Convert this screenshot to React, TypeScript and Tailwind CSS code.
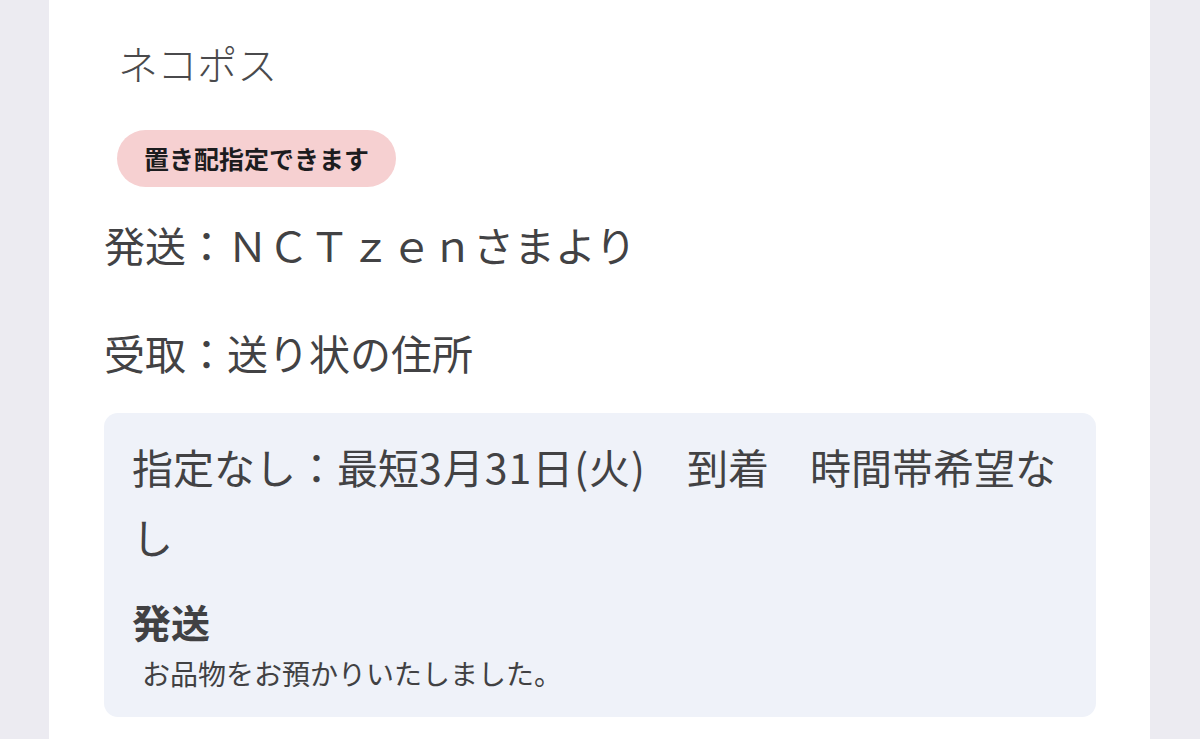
const jp = "font-['Noto_Sans_CJK_JP','Noto_Sans',sans-serif]";

const DeliveryStatus = ({ title, note }: { title: string; note: string }) => (
  <div className="mt-[25px]">
    <div className="text-[39px] leading-[50px] font-bold text-[#414143]">{title}</div>
    <div className="mt-[7px] ml-[10px] text-[28px] leading-[40px] text-[#414143]">{note}</div>
  </div>
);

export default function App() {
  return (
    <div className={`w-full h-[739px] overflow-hidden bg-[#ecebf1] pl-[49px] pr-[50px] ${jp}`}>
      <div className="h-full bg-white pl-[55px] pr-[54px] pt-[35px] flex flex-col items-start">
        <div className="ml-[14px] text-[40px] leading-[56px] font-light text-[#4a4a4c]">ネコポス</div>

        <span className="mt-[39px] ml-[13px] inline-flex items-center h-[57px] px-[27px] rounded-full bg-[#f6d0d1] text-[25px] font-bold text-[#1c1c1e]">
          置き配指定できます
        </span>

        <div className="mt-[27px] text-[41px] leading-[60px] text-[#424244]">発送：ＮＣＴｚｅｎさまより</div>
        <div className="mt-[48px] text-[41px] leading-[60px] text-[#424244]">受取：送り状の住所</div>

        <div className="mt-[31px] self-stretch rounded-[14px] bg-[#eff2f9] pl-[28px] pr-[24px] pt-[18px] pb-[24px]">
          <p className="text-[41px] leading-[70px] text-[#424244]">
            指定なし：最短<span className="tracking-[1px]">3月31日(火)</span>　到着　時間帯希望なし
          </p>
          <DeliveryStatus title="発送" note="お品物をお預かりいたしました。" />
        </div>
      </div>
    </div>
  );
}
